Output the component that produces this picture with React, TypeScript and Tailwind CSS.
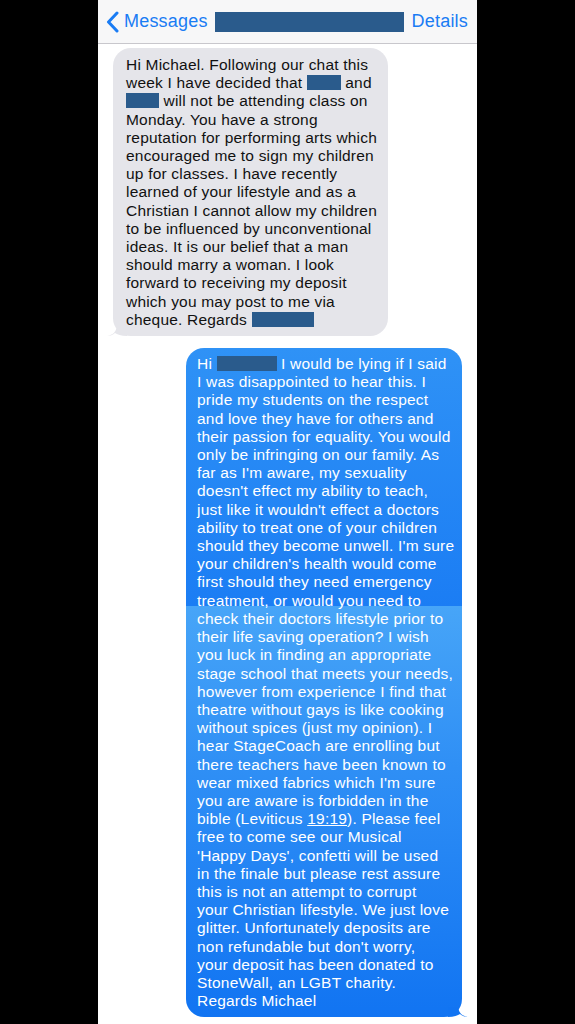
import React from "react";

const FONT = { fontFamily: '"Liberation Sans", Arial, sans-serif' };

/** redacted name block */
function Redact({ w }: { w: number }) {
  return (
    <span
      className="inline-block align-[-2px] h-[15px] bg-[#2a5b8c]"
      style={{ width: w }}
    />
  );
}

const grayLines: React.ReactNode[] = [
  "Hi Michael. Following our chat this",
  <>week I have decided that <Redact w={34} /> and</>,
  <><Redact w={33} /> will not be attending class on</>,
  "Monday. You have a strong",
  "reputation for performing arts which",
  "encouraged me to sign my children",
  "up for classes. I have recently",
  "learned of your lifestyle and as a",
  "Christian I cannot allow my children",
  "to be influenced by unconventional",
  "ideas. It is our belief that a man",
  "should marry a woman. I look",
  "forward to receiving my deposit",
  "which you may post to me via",
  <>cheque. Regards <Redact w={62} /></>,
];

const blueLines: React.ReactNode[] = [
  <>Hi <Redact w={60} /> I would be lying if I said</>,
  "I was disappointed to hear this. I",
  "pride my students on the respect",
  "and love they have for others and",
  "their passion for equality. You would",
  "only be infringing on our family. As",
  "far as I'm aware, my sexuality",
  "doesn't effect my ability to teach,",
  "just like it wouldn't effect a doctors",
  "ability to treat one of your children",
  "should they become unwell. I'm sure",
  "your children's health would come",
  "first should they need emergency",
  "treatment, or would you need to",
  "check their doctors lifestyle prior to",
  "their life saving operation? I wish",
  "you luck in finding an appropriate",
  "stage school that meets your needs,",
  "however from experience I find that",
  "theatre without gays is like cooking",
  "without spices (just my opinion). I",
  "hear StageCoach are enrolling but",
  "there teachers have been known to",
  "wear mixed fabrics which I'm sure",
  "you are aware is forbidden in the",
  <>bible (Leviticus <span className="underline">19:19</span>). Please feel</>,
  "free to come see our Musical",
  "'Happy Days', confetti will be used",
  "in the finale but please rest assure",
  "this is not an attempt to corrupt",
  "your Christian lifestyle. We just love",
  "glitter. Unfortunately deposits are",
  "non refundable but don't worry,",
  "your deposit has been donated to",
  "StoneWall, an LGBT charity.",
  "Regards Michael",
];

function Lines({ lines }: { lines: React.ReactNode[] }) {
  return (
    <>
      {lines.map((l, i) => (
        <div key={i} className="whitespace-nowrap">
          {l}
        </div>
      ))}
    </>
  );
}

export default function App() {
  return (
    <div className="h-[1024px] w-[575px] bg-black flex justify-center overflow-hidden" style={FONT}>
      <div className="w-[379px] h-full bg-white flex flex-col">
        {/* top bar */}
        <div className="h-[44px] shrink-0 bg-[#f7f7f8] border-b border-[#c8c7cc] flex items-center pl-[8px] pr-[9px]">
          <svg width="13" height="22" viewBox="0 0 13 22" className="shrink-0">
            <path d="M11 2 L2.5 11 L11 20" fill="none" stroke="#1a7cf4" strokeWidth="3" strokeLinecap="round" strokeLinejoin="round" />
          </svg>
          <span className="ml-[5px] text-[18px] text-[#1a7cf4] tracking-[0.2px]">Messages</span>
          <div className="ml-[7px] w-[189px] h-[20px] bg-[#2a5b8c]" />
          <span className="ml-auto text-[18px] text-[#1a7cf4] tracking-[0.2px]">Details</span>
        </div>

        {/* thread */}
        <div className="flex flex-col pt-[4px]">
          <div className="relative ml-[15px] w-[275px]">
            <div className="rounded-[18px] bg-[#e5e5ea] text-[#111] text-[15.5px] leading-[18.2px] tracking-[0.2px] pl-[13px] pt-[8px] pb-[7px]">
              <Lines lines={grayLines} />
            </div>
            <svg width="20" height="20" viewBox="0 0 20 20" className="absolute -left-[6px] bottom-0">
              <path d="M0 20 C6 19 9 16 10 10 L20 10 L20 20 C14 20 10 18.5 8 17 C6 19 3 20 0 20 Z" fill="#e5e5ea" />
            </svg>
          </div>

          <div className="relative ml-[88px] mt-[12px] w-[276px]">
            <div className="rounded-[18px] text-white text-[15.5px] leading-[18.2px] tracking-[0.2px] pl-[11px] pt-[7px] pb-[7px] bg-[linear-gradient(180deg,#2f92f6_0px,#1b7df4_258px,#47a5f8_258px,#2f8ff5_420px,#1174f2_100%)]">
              <Lines lines={blueLines} />
            </div>
            <svg width="20" height="20" viewBox="0 0 20 20" className="absolute -right-[6px] bottom-0">
              <path d="M20 20 C14 19 11 16 10 10 L0 10 L0 20 C6 20 10 18.5 12 17 C14 19 17 20 20 20 Z" fill="#1174f2" />
            </svg>
          </div>

          <div className="mt-[3px] mr-[16px] self-end text-[12px] text-[#8e8e93]">
            <span className="font-semibold">Read</span> 15:33
          </div>
        </div>
      </div>
    </div>
  );
}
